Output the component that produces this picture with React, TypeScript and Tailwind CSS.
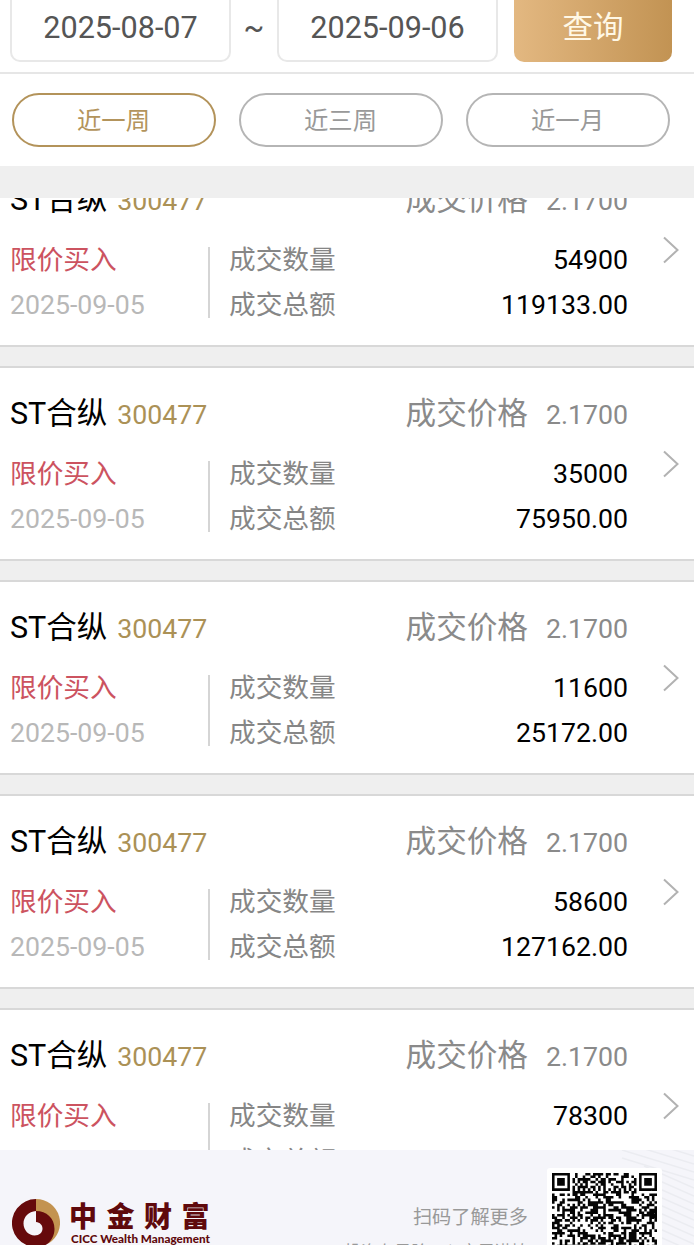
type Deal = {
    quantity: string;
    total: string;
};

const deals: Deal[] = [
    { quantity: "54900", total: "119133.00" },
    { quantity: "35000", total: "75950.00" },
    { quantity: "11600", total: "25172.00" },
    { quantity: "58600", total: "127162.00" },
    { quantity: "78300", total: "169911.00" },
];

const ranges = ["近一周", "近三周", "近一月"];

const QR_SIZE = 41;

function isFinder(x: number, y: number) {
    const ring = Math.max(Math.abs(x - 3), Math.abs(y - 3));
    return ring <= 1 || ring === 3;
}

function isDark(x: number, y: number) {
    const right = QR_SIZE - 1 - x;
    const bottom = QR_SIZE - 1 - y;

    if (x < 8 && y < 8) return x < 7 && y < 7 && isFinder(x, y);
    if (right < 8 && y < 8) return right < 7 && y < 7 && isFinder(right, y);
    if (x < 8 && bottom < 8) return x < 7 && bottom < 7 && isFinder(x, bottom);
    if (y === 6 || x === 6) return (x + y) % 2 === 0;

    let h = (x * 374761393 + y * 668265263) | 0;
    h = Math.imul(h ^ (h >>> 13), 1274126177);
    return ((h ^ (h >>> 16)) & 255) < 140;
}

function QrCode() {
    let d = "";
    for (let y = 0; y < QR_SIZE; y++) {
        for (let x = 0; x < QR_SIZE; x++) {
            if (isDark(x, y)) d += `M${x} ${y}h1v1h-1z`;
        }
    }

    return (
        <div className="h-[115px] w-[115px] shrink-0 rounded-[3px] bg-white p-[5px]">
            <svg viewBox={`0 0 ${QR_SIZE} ${QR_SIZE}`} className="size-[105px]">
                <path d={d} fill="#050505" />
            </svg>
        </div>
    );
}

function Logo() {
    return (
        <svg viewBox="0 0 48 48" className="size-12 shrink-0">
            <path d="M24 0A24 24 0 0 1 36.500 44.500L24 24Z" fill="#c39350" />
            <path
                d="M24 0A24 24 0 1 0 35 45.300C40 41.500 42.500 35.500 42.500 30C42.500 19 34.500 12 24 12Z"
                fill="#660a0c"
            />
            <path
                d="M24 12C16.500 12.500 11.500 18 11.500 24.500C11.500 31.500 17 36.500 22.500 36.500C27.500 36.500 30.500 33.500 30.500 29.500C30.500 26 28 23.500 24 23Z"
                fill="#f5f5fa"
            />
        </svg>
    );
}

function DateField({ value }: { value: string }) {
    return (
        <div className="flex h-[72px] w-[221px] items-center justify-center rounded-[10px] border-2 border-[#e8e8e8] pt-[3px] text-[30.6px] text-[#555]">
            {value}
        </div>
    );
}

function DealCard({ quantity, total }: Deal) {
    return (
        <div className="flex h-[195px] shrink-0 border-y-2 border-[#d8d8d8] bg-white pl-2.5">
            <div className="w-[618px]">
                <div className="flex h-[92px] items-center justify-between">
                    <div className="flex items-baseline">
                        <span className="text-[30.5px] text-black">ST合纵</span>
                        <span className="-mt-px ml-2.5 text-[#ab9156]">300477</span>
                    </div>
                    <div className="flex items-baseline text-[#8a8a8a]">
                        <span className="text-[30.6px]">成交价格</span>
                        <span className="ml-[18px]">2.1700</span>
                    </div>
                </div>
                <div className="flex">
                    <div className="w-[198px] leading-[45px]">
                        <div className="-mt-2 text-[#cc5360]">限价买入</div>
                        <div className="text-[#b8b8b8]">2025-09-05</div>
                    </div>
                    <div className="mt-px h-[71px] w-0.5 bg-[#d5d5d5]" />
                    <div className="-mt-2 ml-[19px] flex-1 leading-[45px]">
                        <div className="flex justify-between">
                            <span className="text-[#868686]">成交数量</span>
                            <span className="text-black">{quantity}</span>
                        </div>
                        <div className="flex justify-between">
                            <span className="text-[#868686]">成交总额</span>
                            <span className="text-black">{total}</span>
                        </div>
                    </div>
                </div>
            </div>
            <svg viewBox="0 0 16 28" className="mt-[82px] ml-[35px] h-7 w-4">
                <path d="M1 1.500L14.500 14L1 26.500" fill="none" stroke="#b2b2b2" strokeWidth="2" />
            </svg>
        </div>
    );
}

export default function App() {
    return (
        <div className="flex h-[1245px] w-[694px] flex-col overflow-hidden bg-[#efefef] font-['Roboto','Noto_Sans_CJK_SC',sans-serif] text-[26.7px]">
            <header className="shrink-0 bg-white">
                <div className="flex h-[74px] items-end overflow-hidden border-b-2 border-[#e6e6e6] pb-2.5 pl-2.5">
                    <DateField value="2025-08-07" />
                    <span className="flex h-[72px] w-[46px] items-center justify-center pt-[3px] text-[30.6px] text-[#555]">
                        ~
                    </span>
                    <DateField value="2025-09-06" />
                    <button className="ml-4 h-[72px] w-[158px] rounded-[10px] bg-linear-to-r from-[#e3b881] to-[#c29353] pt-1 text-[30.5px] text-[#fff8e6]">
                        查询
                    </button>
                </div>
                <div className="flex h-[92px] gap-[23px] pt-[19px] pl-3">
                    {ranges.map((label, i) => (
                        <button
                            key={label}
                            className={`h-[54px] w-[204px] rounded-full border-2 pt-0.5 pr-px text-[24.4px] ${
                                i === 0
                                    ? "border-[#b3935a] text-[#b3945c]"
                                    : "border-[#b5b5b5] text-[#999]"
                            }`}
                        >
                            {label}
                        </button>
                    ))}
                </div>
            </header>

            <main className="mt-8 flex h-[952px] shrink-0 flex-col overflow-hidden">
                <div className="-mt-[46px] flex flex-col gap-[19px]">
                    {deals.map((deal) => (
                        <DealCard key={deal.total} {...deal} />
                    ))}
                </div>
            </main>

            <footer className="relative flex h-[95px] shrink-0 items-start overflow-hidden bg-[#f5f5fa] pl-3">
                <svg viewBox="0 0 80 95" className="absolute top-0 right-0 h-[95px] w-20">
                    {Array.from({ length: 15 }, (_, i) => (
                        <path
                            key={i}
                            d={`M${i < 5 ? 8 : 30} ${i * 8 - 24}L80 ${i * 8 - 2}`}
                            fill="none"
                            stroke="#ebecf1"
                            strokeWidth="1.5"
                        />
                    ))}
                </svg>
                <div className="mt-[49px] flex">
                    <Logo />
                    <div className="ml-[9px] w-[150px] whitespace-nowrap text-[#5f090c]">
                        <div className="mt-1 text-[28px] leading-[29px] font-black tracking-[9.5px]">
                            中金财富
                        </div>
                        <div className="ml-0.5 font-['Lato'] text-[11.7px] leading-[13px] font-black">
                            CICC Wealth Management
                        </div>
                    </div>
                </div>
                <div className="mt-[54px] flex-1 pr-[19px] text-right whitespace-nowrap text-[#999]">
                    <div className="text-[19.2px] leading-7">扫码了解更多</div>
                    <div className="mt-[9px] text-[16.7px] leading-6">投资有风险，入市需谨慎</div>
                </div>
                <div className="relative mt-[18px] mr-8">
                    <QrCode />
                </div>
            </footer>
        </div>
    );
}
